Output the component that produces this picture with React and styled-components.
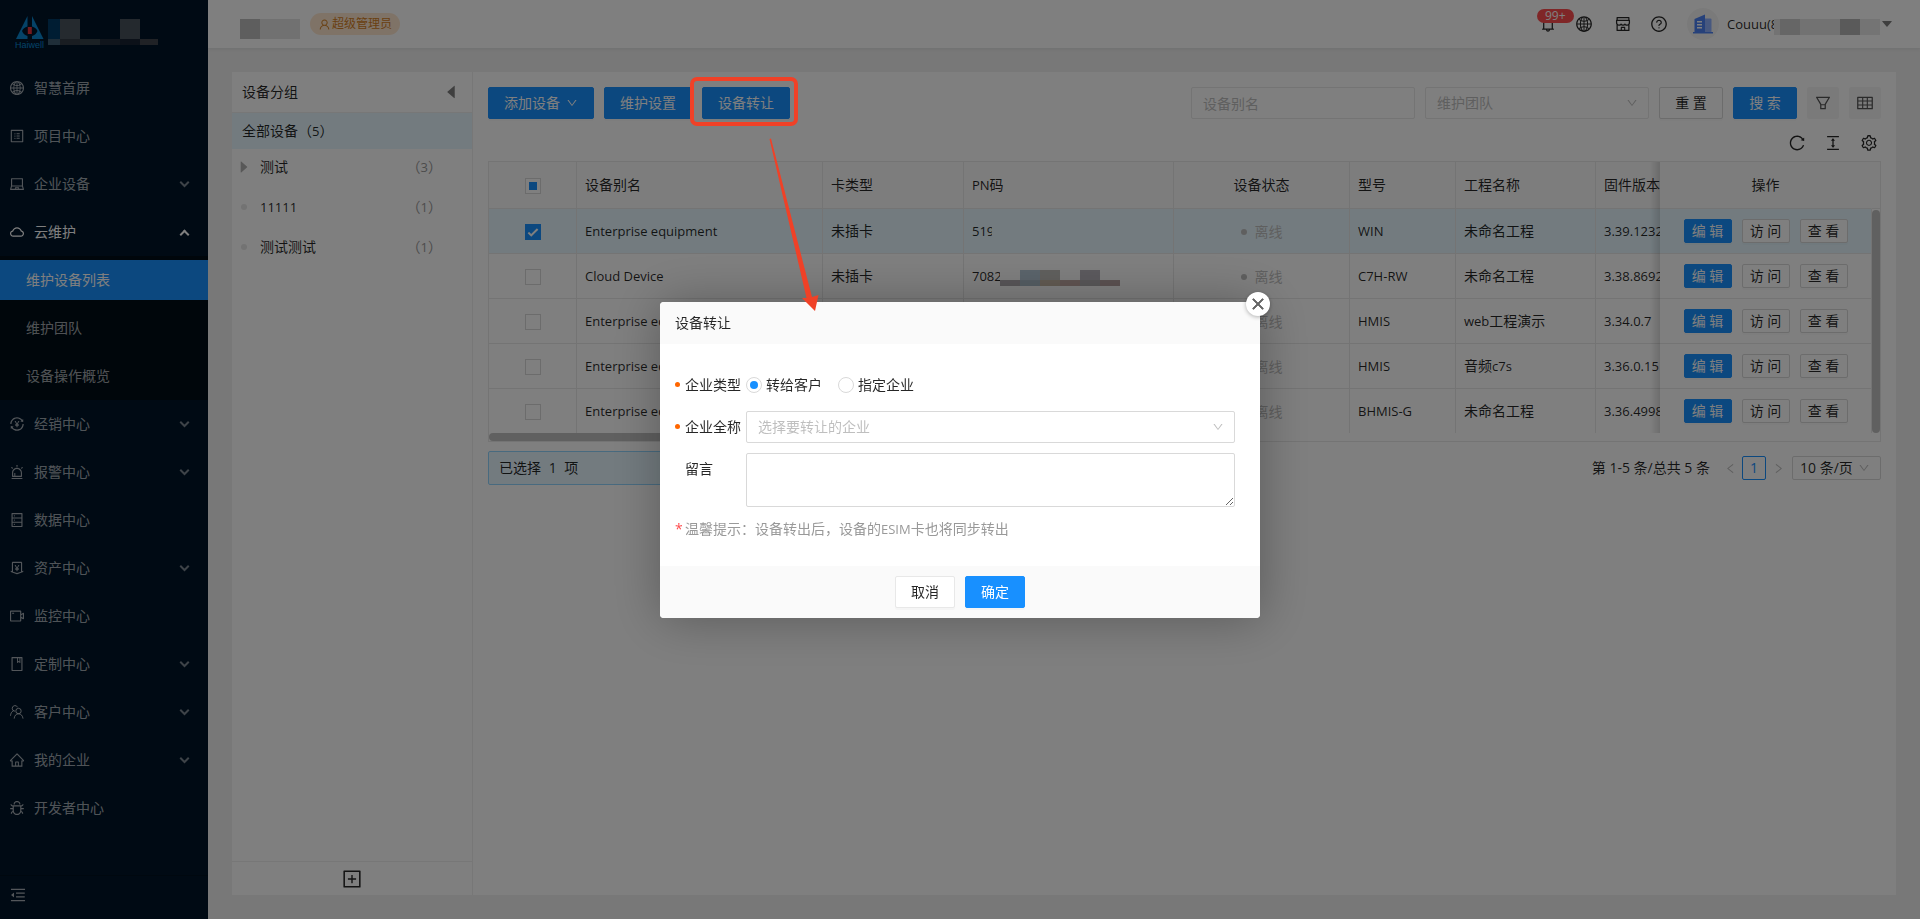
import React, { useState } from "react";
import styled, { createGlobalStyle, css } from "styled-components";
import {
  AiFillCaretDown,
  AiFillCaretLeft,
  AiFillCaretRight,
  AiOutlineAlert,
  AiOutlineBell,
  AiOutlineBook,
  AiOutlineBug,
  AiOutlineClose,
  AiOutlineCloud,
  AiOutlineColumnHeight,
  AiOutlineDatabase,
  AiOutlineDown,
  AiOutlineFilter,
  AiOutlineGlobal,
  AiOutlineHome,
  AiOutlineLaptop,
  AiOutlineLeft,
  AiOutlineMenuFold,
  AiOutlineMoneyCollect,
  AiOutlinePlusSquare,
  AiOutlineProfile,
  AiOutlineQuestionCircle,
  AiOutlineReload,
  AiOutlineRight,
  AiOutlineSetting,
  AiOutlineShop,
  AiOutlineTable,
  AiOutlineTransaction,
  AiOutlineUser,
  AiOutlineVideoCamera,
} from "react-icons/ai";

const COLORS = {
  primary: "#1890ff",
  navy: "#001529",
  navyDark: "#000c17",
  line: "#e8e8e8",
  border: "#d9d9d9",
  head: "#fafafa",
  selected: "#e6f7ff",
  text: "rgba(0, 0, 0, 0.85)",
  muted: "#999999",
  hint: "#bfbfbf",
  mark: "#f04127",
};

const PeopleIcon = () => (
  <svg width="16" height="16" viewBox="0 0 16 16" fill="none" stroke="currentColor">
    <circle cx="9.5" cy="7" r="2.7" />
    <path d="M5.2 14.600C5.400 11.800 7 9.800 9.500 9.800s4.200 2 4.500 4.800" />
    <path d="M6 7.200A2.800 2.800 0 1 1 8.600 3.300M4.400 6.800C2.600 7.700 1.600 9.400 1.500 11.800" />
  </svg>
);

const MENU = [
  { label: "智慧首屏", icon: <AiOutlineGlobal /> },
  { label: "项目中心", icon: <AiOutlineProfile /> },
  { label: "企业设备", icon: <AiOutlineLaptop />, more: true },
  {
    label: "云维护",
    icon: <AiOutlineCloud />,
    more: true,
    children: ["维护设备列表", "维护团队", "设备操作概览"],
  },
  { label: "经销中心", icon: <AiOutlineTransaction />, more: true },
  { label: "报警中心", icon: <AiOutlineAlert />, more: true },
  { label: "数据中心", icon: <AiOutlineDatabase /> },
  { label: "资产中心", icon: <AiOutlineMoneyCollect />, more: true },
  { label: "监控中心", icon: <AiOutlineVideoCamera /> },
  { label: "定制中心", icon: <AiOutlineBook />, more: true },
  { label: "客户中心", icon: <PeopleIcon />, more: true },
  { label: "我的企业", icon: <AiOutlineHome />, more: true },
  { label: "开发者中心", icon: <AiOutlineBug /> },
];

const GROUPS = [
  { name: "测试", count: 3, parent: true },
  { name: "11111", count: 1 },
  { name: "测试测试", count: 1 },
];

const DEVICES = [
  { id: 1, name: "Enterprise equipment", pn: "519", cut: 20, model: "WIN", project: "未命名工程", version: "3.39.1232" },
  { id: 2, name: "Cloud Device", pn: "7082", cut: 28, masked: true, model: "C7H-RW", project: "未命名工程", version: "3.38.8692" },
  { id: 3, name: "Enterprise equipment", pn: "", model: "HMIS", project: <><En>web</En>工程演示</>, version: "3.34.0.7" },
  { id: 4, name: "Enterprise equipment", pn: "", model: "HMIS", project: <>音频<En>c7s</En></>, version: "3.36.0.15" },
  { id: 5, name: "Enterprise equipment", pn: "", model: "BHMIS-G", project: "未命名工程", version: "3.36.4998" },
];

const COLUMNS = [88, 246, 141, 210, 176, 106, 140, 321, 212];

function En({ children }) {
  return <Latin>{children}</Latin>;
}

const Logo = () => (
  <LogoSvg width="30" height="34" viewBox="0 0 30 34">
    <path d="M12.500 1v10.500A9 7 0 0 0 7 16q1.500 4 5.500 5v3H1z" fill="#0a86d1" />
    <path d="M17 1v10.500A9 7 0 0 1 22.500 16q-1.500 4-5.500 5v3h11.500z" fill="#0a86d1" />
    <rect x="12.800" y="12" width="4" height="7" fill="#e8343c" />
    <text x="0" y="33" fontSize="9" fill="#0a86d1">
      Haiwell
    </text>
  </LogoSvg>
);

const BuildingIcon = () => (
  <svg width="22" height="20" viewBox="0 0 22 20">
    <path d="M13 4.500h5.500q1 0 1 1V18H13z" fill="#8fb1ff" />
    <path d="M2.500 5 13 .5V18H2.500z" fill="#4d82f5" />
    <path d="M5 7h5v1.500H5zM5 10h5v1.500H5zM5 13h5v1.500H5z" fill="#ffffff" />
    <path d="M1 18h20v1.500H1z" fill="#4d82f5" />
  </svg>
);

const Sidebar = () => (
  <SidebarWrapper>
    <Brand>
      <Logo />
      <MaskGrid $cols="12px 20px 20px 20px 20px 18px" $rows="20px 6px">
        {["#003a66", "#4a545e", "", "", "#49525c", "", "#3f5d73", "#323a44", "#36424a", "#212b39", "#182233", "#41454c"].map(
          (c, i) => (
            <MaskBlock key={i} $color={c} />
          )
        )}
      </MaskGrid>
    </Brand>
    <Menu>
      {MENU.map((item) => (
        <li key={item.label}>
          <MenuLink href="#" $open={!!item.children}>
            {item.icon}
            <MenuLabel>{item.label}</MenuLabel>
            {item.more && <Chevron $up={!!item.children} />}
          </MenuLink>
          {item.children && (
            <SubMenu>
              {item.children.map((child, i) => (
                <li key={child}>
                  <SubLink href="#" $active={i === 0}>
                    {child}
                  </SubLink>
                </li>
              ))}
            </SubMenu>
          )}
        </li>
      ))}
    </Menu>
    <FoldButton aria-label="收起菜单">
      <AiOutlineMenuFold />
    </FoldButton>
  </SidebarWrapper>
);

const TopBar = () => (
  <TopBarWrapper>
    <MaskGrid $cols="20px 40px" $rows="20px">
      <MaskBlock $color="#bdbdbd" />
      <MaskBlock $color="#e2e2e2" />
    </MaskGrid>
    <RoleTag>
      <AiOutlineUser />
      超级管理员
    </RoleTag>
    <TopIcons>
      <IconGroup>
        <BellButton aria-label="消息">
          <AiOutlineBell />
          <Badge>99+</Badge>
        </BellButton>
        <IconButton aria-label="语言">
          <AiOutlineGlobal />
        </IconButton>
      </IconGroup>
      <IconGroup>
        <IconButton aria-label="商城">
          <AiOutlineShop />
        </IconButton>
        <IconButton aria-label="帮助">
          <AiOutlineQuestionCircle />
        </IconButton>
      </IconGroup>
    </TopIcons>
    <Account>
      <Avatar>
        <BuildingIcon />
      </Avatar>
      <CutText $width={47}>
        <En>Couuu(8</En>
      </CutText>
      <MaskGrid $cols="6px 20px 40px 20px 20px" $rows="16px">
        {["#e6e6e6", "#cccccc", "#e4e4e4", "#b4b4b4", "#e8e8e8"].map((c, i) => (
          <MaskBlock key={i} $color={c} />
        ))}
      </MaskGrid>
      <AiFillCaretDown />
    </Account>
  </TopBarWrapper>
);

const GroupPanel = () => (
  <GroupWrapper>
    <GroupHeader>
      设备分组
      <AiFillCaretLeft />
    </GroupHeader>
    <GroupAll>
      全部设备（<En>5</En>）
    </GroupAll>
    <GroupList>
      {GROUPS.map((g) => (
        <GroupRow key={g.name}>
          <GroupMark>{g.parent ? <AiFillCaretRight /> : <Dot $size={6} $color="#e6e6e6" />}</GroupMark>
          <GroupName>{/^\d/.test(g.name) ? <En>{g.name}</En> : g.name}</GroupName>
          <GroupCount>
            （<En>{g.count}</En>）
          </GroupCount>
        </GroupRow>
      ))}
    </GroupList>
    <GroupAdd aria-label="添加分组">
      <AiOutlinePlusSquare />
    </GroupAdd>
  </GroupWrapper>
);

const Toolbar = ({ onTransfer }) => (
  <ToolbarWrapper>
    <Button $primary>
      添加设备
      <AiOutlineDown />
    </Button>
    <Button $primary>维护设置</Button>
    <Marked>
      <Button $primary onClick={onTransfer}>
        设备转让
      </Button>
      <MarkFrame />
      <MarkArrow width="60" height="180" viewBox="0 0 60 180">
        <path d="M9.500 4 11 3.500 52 162l6.500-2L55 176 42 163l4.500 0z" fill={COLORS.mark} />
      </MarkArrow>
    </Marked>
    <Filters>
      <SearchInput placeholder="设备别名" aria-label="设备别名" />
      <SelectBox $size="search">
        <select defaultValue="" aria-label="维护团队">
          <option value="">维护团队</option>
        </select>
        <AiOutlineDown />
      </SelectBox>
      <Button $wide>重 置</Button>
      <Button $primary $wide>
        搜 索
      </Button>
      <SquareButton aria-label="筛选">
        <AiOutlineFilter />
      </SquareButton>
      <SquareButton aria-label="表格">
        <AiOutlineTable />
      </SquareButton>
    </Filters>
  </ToolbarWrapper>
);

const DeviceTable = () => {
  const [selected, setSelected] = useState([1]);
  const toggle = (id) =>
    setSelected((ids) => (ids.includes(id) ? ids.filter((i) => i !== id) : [...ids, id]));

  return (
    <>
      <TableFrame>
        <TableScroll>
          <Table>
            <colgroup>
              {COLUMNS.map((w, i) => (
                <Col key={i} $width={w} />
              ))}
            </colgroup>
            <thead>
              <tr>
                <Th $center>
                  <Checkbox type="checkbox" $partial aria-label="全选" />
                </Th>
                <Th>设备别名</Th>
                <Th>卡类型</Th>
                <Th>
                  <En>PN</En>码
                </Th>
                <Th $center>设备状态</Th>
                <Th>型号</Th>
                <Th>工程名称</Th>
                <Th>固件版本</Th>
                <Th $center $fixed>
                  操作
                </Th>
              </tr>
            </thead>
            <tbody>
              {DEVICES.map((d) => (
                <Tr key={d.id} $selected={selected.includes(d.id)}>
                  <Td $center>
                    <Checkbox
                      type="checkbox"
                      checked={selected.includes(d.id)}
                      onChange={() => toggle(d.id)}
                      aria-label={d.name}
                    />
                  </Td>
                  <Td>
                    <En>{d.name}</En>
                  </Td>
                  <Td>未插卡</Td>
                  <Td>
                    <PnCell>
                      {d.pn && (
                        <CutText $width={d.cut}>
                          <En>{d.pn}</En>
                        </CutText>
                      )}
                      {d.masked && (
                        <MaskGrid $cols="20px 20px 20px 20px 20px 20px" $rows="10px 6px">
                          {["", "#b7c9d8", "#c2c0bc", "", "#b9b5bd", "", "#b0abb0", "#a9bac6", "#c3b5a3", "#c0a8a4", "#b0adb0", "#b8a4a4"].map(
                            (c, i) => (
                              <MaskBlock key={i} $color={c} />
                            )
                          )}
                        </MaskGrid>
                      )}
                    </PnCell>
                  </Td>
                  <Td $center>
                    <Status>
                      <Dot $size={6} $color="#bfbfbf" />
                      离线
                    </Status>
                  </Td>
                  <Td>
                    <En>{d.model}</En>
                  </Td>
                  <Td>{d.project}</Td>
                  <Td>
                    <En>{d.version}</En>
                  </Td>
                  <Td $center $fixed>
                    <RowActions>
                      <Button $primary $small>
                        编 辑
                      </Button>
                      <Button $small>访 问</Button>
                      <Button $small>查 看</Button>
                    </RowActions>
                  </Td>
                </Tr>
              ))}
            </tbody>
          </Table>
        </TableScroll>
        <VerticalTrack>
          <VerticalThumb />
        </VerticalTrack>
        <HorizontalTrack>
          <HorizontalThumb />
        </HorizontalTrack>
      </TableFrame>
      <TableFooter>
        <SelectedInfo>
          已选择 <SelectedCount>{selected.length}</SelectedCount> 项
        </SelectedInfo>
        <Pagination>
          <span>第 1-5 条/总共 5 条</span>
          <PageArrow aria-label="上一页">
            <AiOutlineLeft />
          </PageArrow>
          <PageNumber>1</PageNumber>
          <PageArrow aria-label="下一页">
            <AiOutlineRight />
          </PageArrow>
          <SelectBox $size="page">
            <select defaultValue="10" aria-label="每页条数">
              <option value="10">10 条/页</option>
            </select>
            <AiOutlineDown />
          </SelectBox>
        </Pagination>
      </TableFooter>
    </>
  );
};

const TransferModal = ({ onClose }) => {
  const [type, setType] = useState("customer");
  return (
    <Overlay>
      <Modal role="dialog" aria-labelledby="transfer-title">
        <ModalClose onClick={onClose} aria-label="关闭">
          <AiOutlineClose />
        </ModalClose>
        <ModalHeader id="transfer-title">设备转让</ModalHeader>
        <ModalBody>
          <FormRow>
            <FormLabel $required as="span">
              企业类型
            </FormLabel>
            <RadioLabel>
              <Radio
                type="radio"
                name="type"
                checked={type === "customer"}
                onChange={() => setType("customer")}
              />
              转给客户
            </RadioLabel>
            <RadioLabel>
              <Radio
                type="radio"
                name="type"
                checked={type === "company"}
                onChange={() => setType("company")}
              />
              指定企业
            </RadioLabel>
          </FormRow>
          <FormRow>
            <FormLabel $required htmlFor="company">
              企业全称
            </FormLabel>
            <SelectBox $size="form">
              <select id="company" defaultValue="">
                <option value="">选择要转让的企业</option>
              </select>
              <AiOutlineDown />
            </SelectBox>
          </FormRow>
          <FormRow>
            <FormLabel htmlFor="message">留言</FormLabel>
            <TextArea id="message" />
          </FormRow>
          <Tip>
            <TipStar>*</TipStar>
            <span>
              温馨提示：设备转出后，设备的<En>ESIM</En>卡也将同步转出
            </span>
          </Tip>
        </ModalBody>
        <ModalFooter>
          <Button $modal onClick={onClose}>
            取消
          </Button>
          <Button $modal $primary onClick={onClose}>
            确定
          </Button>
        </ModalFooter>
      </Modal>
    </Overlay>
  );
};

const App = () => {
  const [open, setOpen] = useState(true);
  return (
    <>
      <GlobalStyle />
      <Layout>
        <Sidebar />
        <Main>
          <TopBar />
          <Content>
            <GroupPanel />
            <DevicePanel>
              <Toolbar onTransfer={() => setOpen(true)} />
              <TableTools>
                <IconButton aria-label="刷新">
                  <AiOutlineReload />
                </IconButton>
                <IconButton aria-label="密度">
                  <AiOutlineColumnHeight />
                </IconButton>
                <IconButton aria-label="设置">
                  <AiOutlineSetting />
                </IconButton>
              </TableTools>
              <DeviceTable />
            </DevicePanel>
          </Content>
        </Main>
      </Layout>
      {open && <TransferModal onClose={() => setOpen(false)} />}
    </>
  );
};

const GlobalStyle = createGlobalStyle`
  *, *::before, *::after {
    box-sizing: border-box;
  }
  body {
    margin: 0;
    font-family: "Open Sans", "Noto Sans CJK SC", sans-serif;
    font-size: 14px;
    line-height: 20px;
    color: ${COLORS.text};
  }
  button, input, select, textarea {
    font: inherit;
    color: inherit;
  }
  button {
    cursor: pointer;
  }
  ul {
    margin: 0;
    padding: 0;
    list-style: none;
  }
`;

// page frame
const Layout = styled.div`
  display: flex;
  min-height: 100vh;
  background: #f0f0f0;
`;
const Main = styled.div`
  flex: 1;
  min-width: 0;
  display: flex;
  flex-direction: column;
`;
const Content = styled.main`
  flex: 1;
  display: flex;
  padding: 24px;
`;

// small shared parts
const Latin = styled.span`
  font-size: 13px;
`;
const MaskGrid = styled.div`
  display: grid;
  grid-template-columns: ${(p) => p.$cols};
  grid-template-rows: ${(p) => p.$rows};
`;
const MaskBlock = styled.span`
  background: ${(p) => p.$color || "transparent"};
`;
const CutText = styled.span`
  display: block;
  width: ${(p) => p.$width}px;
  overflow: hidden;
  white-space: nowrap;
`;
const Dot = styled.span`
  width: ${(p) => p.$size}px;
  height: ${(p) => p.$size}px;
  border-radius: 50%;
  background: ${(p) => p.$color};
`;
const IconButton = styled.button`
  display: flex;
  padding: 0;
  border: none;
  background: none;
  font-size: 18px;
`;

const Button = styled.button`
  display: inline-flex;
  align-items: center;
  justify-content: center;
  gap: 6px;
  height: 32px;
  padding: 0 15px;
  border: 1px solid ${COLORS.border};
  border-radius: 2px;
  background: #ffffff;
  white-space: nowrap;
  box-shadow: 0 2px 0 rgba(0, 0, 0, 0.02);

  svg {
    width: 12px;
    height: 12px;
  }
  ${(p) =>
    p.$primary &&
    css`
      border-color: ${COLORS.primary};
      background: ${COLORS.primary};
      color: #ffffff;
    `}
  ${(p) =>
    p.$wide &&
    css`
      width: 64px;
    `}
  ${(p) =>
    p.$small &&
    css`
      width: 48px;
      height: 24px;
      padding: 0;
    `}
  ${(p) =>
    p.$modal &&
    css`
      width: 60px;
      border-color: ${p.$primary ? COLORS.primary : COLORS.line};
    `}
`;

const SELECT_SIZES = {
  search: css`
    width: 224px;
    height: 32px;
    color: ${COLORS.hint};
    border-color: ${COLORS.line};
  `,
  page: css`
    width: 89px;
    height: 24px;
  `,
  form: css`
    flex: 1;
    height: 32px;
    color: ${COLORS.hint};
  `,
};
const SelectBox = styled.div`
  display: flex;
  align-items: center;
  padding-right: 10px;
  border: 1px solid ${COLORS.border};
  border-radius: 2px;
  background: #ffffff;
  ${(p) => SELECT_SIZES[p.$size]}

  select {
    flex: 1;
    min-width: 0;
    height: 100%;
    padding: 0 0 0 ${(p) => (p.$size === "page" ? 7 : 11)}px;
    border: none;
    outline: none;
    appearance: none;
    background: none;
  }
  svg {
    width: 12px;
    height: 12px;
    color: ${COLORS.hint};
  }
`;

// sidebar
const SidebarWrapper = styled.nav`
  flex: none;
  width: 208px;
  display: flex;
  flex-direction: column;
  background: ${COLORS.navy};
`;
const Brand = styled.div`
  display: flex;
  gap: 3px;
  height: 64px;
  padding: 15px 0 0 15px;

  ${MaskGrid} {
    margin-top: 4px;
  }
`;
const LogoSvg = styled.svg`
  font-family: "Liberation Sans", sans-serif;
`;
const Menu = styled.ul`
  flex: 1;
`;
const MenuLink = styled.a`
  display: flex;
  align-items: center;
  gap: 9px;
  height: 48px;
  padding: 0 18px 0 9px;
  color: ${(p) => (p.$open ? "#ffffff" : "rgba(255, 255, 255, 0.65)")};
  text-decoration: none;

  svg {
    width: 16px;
    height: 16px;
  }
`;
const MenuLabel = styled.span`
  flex: 1;
`;
const Chevron = styled.span`
  width: 7px;
  height: 7px;
  margin-right: 2px;
  border: solid currentColor;
  border-width: 0 2px 2px 0;
  opacity: ${(p) => (p.$up ? 1 : 0.75)};
  transform: ${(p) => (p.$up ? "translateY(2px) rotate(225deg)" : "translateY(-2px) rotate(45deg)")};
`;
const SubMenu = styled.ul`
  display: flex;
  flex-direction: column;
  gap: 8px;
  padding: 4px 0;
  background: ${COLORS.navyDark};
`;
const SubLink = styled.a`
  display: flex;
  align-items: center;
  height: 40px;
  padding-left: 26px;
  color: ${(p) => (p.$active ? "#ffffff" : "rgba(255, 255, 255, 0.65)")};
  background: ${(p) => (p.$active ? COLORS.primary : "transparent")};
  text-decoration: none;
`;
const FoldButton = styled.button`
  display: flex;
  align-items: center;
  height: 44px;
  padding: 0 9px 6px;
  border: none;
  border-top: 1px solid #00101f;
  background: none;
  color: rgba(255, 255, 255, 0.65);
  font-size: 18px;
`;

// top bar
const TopBarWrapper = styled.header`
  display: flex;
  align-items: center;
  height: 48px;
  padding: 0 26px 0 32px;
  background: #ffffff;
  box-shadow: 0 1px 4px rgba(0, 21, 41, 0.08);

  > ${MaskGrid} {
    margin-top: 10px;
  }
`;
const RoleTag = styled.span`
  display: flex;
  align-items: center;
  gap: 1px;
  height: 22px;
  margin-left: 10px;
  padding: 0 8px;
  border-radius: 11px;
  background: #ffe7cf;
  color: #d48024;
  font-size: 12px;

  svg {
    width: 13px;
    height: 13px;
  }
`;
const TopIcons = styled.div`
  display: flex;
  gap: 21px;
  margin-left: auto;
`;
const IconGroup = styled.div`
  display: flex;
  gap: 18px;
`;
const BellButton = styled(IconButton)`
  position: relative;
`;
const Badge = styled.span`
  position: absolute;
  top: -6px;
  left: -2px;
  height: 14px;
  padding: 0 8px;
  border-radius: 7px;
  background: #ff4d4f;
  color: #ffffff;
  font-size: 12px;
  line-height: 14px;
`;
const Account = styled.div`
  display: flex;
  align-items: center;
  margin-left: 19px;

  ${MaskGrid} {
    margin-top: 6px;
  }
  > svg {
    width: 14px;
    height: 14px;
    color: #7f7f7f;
  }
`;
const Avatar = styled.span`
  display: flex;
  align-items: center;
  justify-content: center;
  width: 32px;
  height: 32px;
  margin-right: 8px;
  border-radius: 50%;
  background: #f5f5f5;
`;

// group panel
const GroupWrapper = styled.aside`
  flex: none;
  display: flex;
  flex-direction: column;
  width: 241px;
  border-right: 1px solid #efefef;
  background: #ffffff;
`;
const GroupHeader = styled.div`
  display: flex;
  align-items: center;
  justify-content: space-between;
  height: 41px;
  padding: 0 12px 0 10px;
  border-bottom: 1px solid #efefef;

  svg {
    width: 18px;
    height: 18px;
    color: #7f7f7f;
  }
`;
const GroupAll = styled.div`
  display: flex;
  align-items: center;
  height: 36px;
  padding-left: 10px;
  background: ${COLORS.selected};
`;
const GroupList = styled.ul`
  flex: 1;
  margin-top: -2px;
`;
const GroupRow = styled.li`
  display: flex;
  align-items: center;
  height: 40px;
  padding: 0 30px 0 6px;
`;
const GroupMark = styled.span`
  display: flex;
  justify-content: center;
  width: 12px;
  margin-right: 10px;
  color: #b0b0b0;

  svg {
    flex: none;
    width: 16px;
    height: 16px;
  }
`;
const GroupName = styled.span`
  flex: 1;
`;
const GroupCount = styled.span`
  color: ${COLORS.muted};
`;
const GroupAdd = styled.button`
  display: flex;
  align-items: center;
  justify-content: center;
  height: 34px;
  border: none;
  border-top: 1px solid #efefef;
  background: none;
  font-size: 22px;
`;

// device panel
const DevicePanel = styled.section`
  flex: 1;
  min-width: 0;
  padding: 15px;
  background: #ffffff;
`;
const ToolbarWrapper = styled.div`
  display: flex;
  gap: 10px;
`;
const Filters = styled.div`
  display: flex;
  gap: 10px;
  margin-left: auto;
`;
const SearchInput = styled.input`
  width: 224px;
  height: 32px;
  padding: 0 11px;
  border: 1px solid ${COLORS.line};
  border-radius: 2px;

  &::placeholder {
    color: ${COLORS.hint};
  }
`;
const SquareButton = styled(IconButton)`
  align-items: center;
  justify-content: center;
  width: 32px;
  height: 32px;
  border-radius: 2px;
  background: #f5f5f5;
  color: #555555;
`;
const TableTools = styled.div`
  display: flex;
  justify-content: flex-end;
  gap: 18px;
  padding: 15px 3px 9px;
`;

// marker drawn over the dimmed page
const Marked = styled.div`
  position: relative;
`;
const MarkFrame = styled.span`
  position: absolute;
  z-index: 30;
  top: -10px;
  left: -12px;
  width: 108px;
  height: 49px;
  border: 4px solid ${COLORS.mark};
  border-radius: 7px;
  pointer-events: none;
`;
const MarkArrow = styled.svg`
  position: absolute;
  z-index: 30;
  top: 48px;
  left: 58px;
  pointer-events: none;
`;

// table
const TableFrame = styled.div`
  display: grid;
  grid-template-columns: minmax(0, 1fr) 8px;
  border: 1px solid ${COLORS.line};
`;
const TableScroll = styled.div`
  overflow: hidden;
`;
const Table = styled.table`
  width: 1640px;
  table-layout: fixed;
  border-collapse: separate;
  border-spacing: 0;
`;
const Col = styled.col`
  width: ${(p) => p.$width}px;
`;
const cell = css`
  padding: 0 8px;
  border-right: 1px solid ${COLORS.line};
  border-bottom: 1px solid ${COLORS.line};
  text-align: ${(p) => (p.$center ? "center" : "left")};
  font-weight: normal;
  white-space: nowrap;
  ${(p) =>
    p.$fixed &&
    css`
      position: sticky;
      right: 0;

      &::before {
        content: "";
        position: absolute;
        top: 0;
        bottom: -1px;
        left: -10px;
        width: 10px;
        background: linear-gradient(to left, rgba(0, 0, 0, 0.14), transparent);
      }
    `}
`;
const Th = styled.th`
  ${cell}
  height: 47px;
  background: ${COLORS.head};

  &:last-child {
    border-right-color: transparent;
  }
`;
const Td = styled.td`
  ${cell}
  height: 45px;
  background: inherit;
`;
const Tr = styled.tr`
  background: ${(p) => (p.$selected ? COLORS.selected : "#ffffff")};

  &:last-child ${Td} {
    height: 44px;
    border-bottom: none;
  }
`;
const Checkbox = styled.input`
  appearance: none;
  display: inline-grid;
  place-items: center;
  width: 16px;
  height: 16px;
  margin: 0;
  border: 1px solid ${COLORS.border};
  background: #ffffff;
  vertical-align: middle;

  &:checked {
    border-color: ${COLORS.primary};
    background: ${COLORS.primary};
  }
  &:checked::before {
    content: "";
    width: 10px;
    height: 5px;
    border: solid #ffffff;
    border-width: 0 0 2px 2px;
    transform: translateY(-1px) rotate(-45deg);
  }
  ${(p) =>
    p.$partial &&
    css`
      &::before {
        content: "";
        width: 8px;
        height: 8px;
        background: ${COLORS.primary};
      }
    `}
`;
const PnCell = styled.div`
  display: flex;
  align-items: center;

  ${MaskGrid} {
    margin-top: 4px;
  }
`;
const Status = styled.span`
  display: inline-flex;
  align-items: center;
  gap: 8px;
  color: ${COLORS.hint};
`;
const RowActions = styled.div`
  display: flex;
  justify-content: center;
  gap: 10px;
`;
const VerticalTrack = styled.div`
  padding-top: 48px;
  background: linear-gradient(${COLORS.head} 46px, ${COLORS.line} 46px 47px, #ffffff 47px);
`;
const VerticalThumb = styled.div`
  height: 100%;
  border-radius: 4px;
  background: #c1c1c1;
`;
const HorizontalTrack = styled.div`
  grid-column: 1 / -1;
`;
const HorizontalThumb = styled.div`
  width: 50%;
  height: 8px;
  border-radius: 4px;
  background: #c1c1c1;
`;

// table footer
const TableFooter = styled.div`
  display: flex;
  align-items: center;
  justify-content: space-between;
  margin-top: 9px;
`;
const SelectedInfo = styled.div`
  flex: 1;
  max-width: 400px;
  padding: 6px 10px;
  border: 1px solid #91d5ff;
  border-radius: 2px;
  background: ${COLORS.selected};
`;
const SelectedCount = styled.span`
  margin: 0 4px;
`;
const Pagination = styled.div`
  display: flex;
  align-items: center;

  ${SelectBox} {
    margin-left: 2px;
  }
`;
const PageArrow = styled.button`
  display: flex;
  align-items: center;
  justify-content: center;
  width: 24px;
  height: 24px;
  padding: 0;
  border: none;
  background: none;
  color: ${COLORS.hint};

  &:first-of-type {
    margin-left: 8px;
  }
  svg {
    width: 13px;
    height: 13px;
  }
`;
const PageNumber = styled.button`
  width: 24px;
  height: 24px;
  padding: 0;
  border: 1px solid ${COLORS.primary};
  border-radius: 2px;
  background: #ffffff;
  color: ${COLORS.primary};
`;

// modal
const Overlay = styled.div`
  position: fixed;
  inset: 0;
  z-index: 20;
  display: flex;
  align-items: center;
  justify-content: center;
  background: rgba(0, 0, 0, 0.5);
`;
const Modal = styled.div`
  position: relative;
  width: 600px;
  border-radius: 4px;
  background: #ffffff;
  box-shadow: 1px 1px 50px rgba(0, 0, 0, 0.3);
`;
const ModalClose = styled(IconButton)`
  position: absolute;
  top: -10px;
  right: -10px;
  align-items: center;
  justify-content: center;
  width: 24px;
  height: 24px;
  border-radius: 50%;
  background: #ffffff;
  color: #666666;
  box-shadow: 0 1px 4px rgba(0, 0, 0, 0.3);

  svg {
    width: 16px;
    height: 16px;
    stroke-width: 60px;
  }
`;
const ModalHeader = styled.div`
  height: 42px;
  padding: 0 15px;
  border-radius: 4px 4px 0 0;
  background: ${COLORS.head};
  line-height: 42px;
`;
const ModalBody = styled.div`
  display: flex;
  flex-direction: column;
  gap: 10px;
  padding: 25px 25px 27px 15px;
`;
const FormRow = styled.div`
  display: flex;
  align-items: flex-start;
`;
const FormLabel = styled.label`
  display: flex;
  align-items: center;
  width: 71px;
  height: 32px;

  &::before {
    content: "";
    width: 5px;
    height: 5px;
    margin-right: 5px;
    border-radius: 50%;
    background: ${(p) => (p.$required ? "#ff6600" : "transparent")};
  }
`;
const RadioLabel = styled.label`
  display: flex;
  align-items: center;
  gap: 4px;
  height: 32px;
  margin-right: 16px;
`;
const Radio = styled.input`
  appearance: none;
  display: grid;
  place-items: center;
  width: 16px;
  height: 16px;
  margin: 0;
  border: 1px solid ${COLORS.border};
  border-radius: 50%;

  &:checked::before {
    content: "";
    width: 8px;
    height: 8px;
    border-radius: 50%;
    background: ${COLORS.primary};
  }
`;
const TextArea = styled.textarea`
  flex: 1;
  height: 54px;
  padding: 4px 11px;
  border: 1px solid ${COLORS.border};
  border-radius: 2px;
  resize: vertical;
`;
const Tip = styled.div`
  display: flex;
  margin-top: 2px;
  color: ${COLORS.muted};
`;
const TipStar = styled.span`
  width: 10px;
  color: #ff4d4f;
`;
const ModalFooter = styled.div`
  display: flex;
  justify-content: center;
  gap: 10px;
  padding: 10px;
  border-radius: 0 0 4px 4px;
  background: ${COLORS.head};
`;

export default App;
